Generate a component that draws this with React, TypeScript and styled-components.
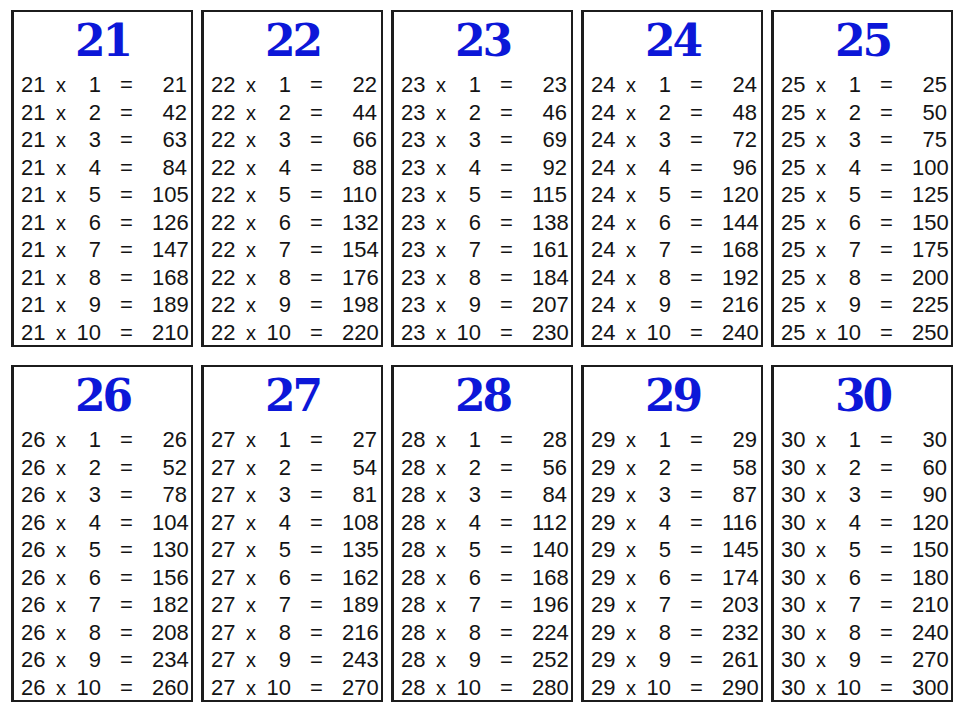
import React from 'react';
import styled, { createGlobalStyle } from 'styled-components';

const GlobalStyle = createGlobalStyle`
  html, body {
    margin: 0;
    padding: 0;
    background: #ffffff;
  }
`;

const Page = styled.div`
  width: 962px;
  height: 717px;
  box-sizing: border-box;
  padding: 10px 0 0 11px;
  display: grid;
  grid-template-columns: repeat(5, 182px);
  grid-auto-rows: 337px;
  column-gap: 8px;
  row-gap: 18px;
  background: #fff;
`;

const Card = styled.div`
  box-sizing: border-box;
  border: 2px solid #1c1c1c;
  border-left-width: 3px;
  background: #fff;
  display: flex;
  flex-direction: column;
`;

const Title = styled.div`
  flex: 0 0 59px;
  display: flex;
  align-items: center;
  justify-content: center;
  font-family: 'DejaVu Serif', 'Liberation Serif', serif;
  font-weight: 700;
  font-size: 44px;
  letter-spacing: -3px;
  color: #0c17d8;
  padding-bottom: 2px;
  box-sizing: border-box;
`;

const Rows = styled.div`
  display: flex;
  flex-direction: column;
`;

const Row = styled.div`
  box-sizing: border-box;
  flex: 0 0 27.5px;
  display: grid;
  grid-template-columns: 30px 20px 30px 51px 1fr;
  align-items: center;
  padding: 1px 4px 0 7px;
  font-family: 'Liberation Sans', Arial, sans-serif;
  font-size: 22px;
  color: #141414;
  line-height: 1;
`;

const Cell = styled.span<{ $align?: 'left' | 'center' | 'right' }>`
  text-align: ${(p) => p.$align ?? 'left'};
`;

const Times = styled(Cell)`
  font-size: 20px;
`;

function TableCard({ n }: { n: number }) {
  return (
    <Card>
      <Title>{n}</Title>
      <Rows>
        {Array.from({ length: 10 }, (_, i) => i + 1).map((m) => (
          <Row key={m}>
            <Cell>{n}</Cell>
            <Times $align="center">x</Times>
            <Cell $align="right">{m}</Cell>
            <Cell $align="center">=</Cell>
            <Cell $align="right">{n * m}</Cell>
          </Row>
        ))}
      </Rows>
    </Card>
  );
}

export default function App() {
  const numbers = Array.from({ length: 10 }, (_, i) => 21 + i);
  return (
    <>
      <GlobalStyle />
      <Page>
        {numbers.map((n) => (
          <TableCard key={n} n={n} />
        ))}
      </Page>
    </>
  );
}
